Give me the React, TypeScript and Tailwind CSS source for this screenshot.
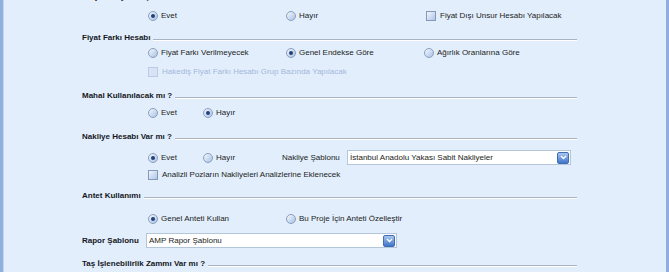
import React from 'react';

const font = { fontFamily: '"Liberation Sans", Arial, sans-serif' };

const Heading = ({ text, className = '' }: { text: string; className?: string }) => (
  <div className={`flex h-[14px] items-center ${className}`}>
    <span className="whitespace-nowrap text-[8px] font-bold text-[#15171c]">{text}</span>
    <div className="ml-[3px] mt-[3px] h-[2px] flex-1 border-t border-b border-t-[#aab3bf] border-b-white" />
  </div>
);

const Radio = ({ checked = false }: { checked?: boolean }) => (
  <span className="flex h-[10px] w-[10px] shrink-0 items-center justify-center rounded-full border border-[#8a9fbd] bg-gradient-to-br from-[#f4f8fd] to-[#a9c3e6]">
    {checked && <span className="h-[4px] w-[4px] rounded-full bg-[#24417a]" />}
  </span>
);

const Check = ({ disabled = false }: { disabled?: boolean }) => (
  <span
    className={`h-[10px] w-[10px] shrink-0 border ${
      disabled
        ? 'border-[#bccbe1] bg-[#d7e4f5]'
        : 'border-[#8498b8] bg-gradient-to-br from-[#f2f6fc] to-[#aec6e8]'
    }`}
  />
);

const Option = ({ label, checked, width }: { label: string; checked?: boolean; width: string }) => (
  <div className={`flex items-center gap-[3px] ${width}`}>
    <Radio checked={checked} />
    <span className="whitespace-nowrap text-[8px] text-[#1b1d22]">{label}</span>
  </div>
);

const CheckRow = ({ label, disabled }: { label: string; disabled?: boolean }) => (
  <div className="flex items-center gap-[4px]">
    <Check disabled={disabled} />
    <span className={`whitespace-nowrap text-[8px] ${disabled ? 'text-[#a2b8da]' : 'text-[#1b1d22]'}`}>
      {label}
    </span>
  </div>
);

const Select = ({ value, width }: { value: string; width: string }) => (
  <div className={`flex h-[15px] items-center justify-between border border-[#b3c6dc] bg-white pl-[2px] pr-[1px] ${width}`}>
    <span className="whitespace-nowrap text-[8px] text-[#1b1d22]">{value}</span>
    <span className="flex h-[12px] w-[12px] items-center justify-center rounded-[2px] border border-[#3f6db4] bg-gradient-to-b from-[#a9c7f0] to-[#3e74c9]">
      <svg width="7" height="5" viewBox="0 0 7 5">
        <path d="M1 1 L3.5 3.5 L6 1" fill="none" stroke="white" strokeWidth="1.4" />
      </svg>
    </span>
  </div>
);

export default function App() {
  return (
    <div
      className="h-[272px] w-[669px] overflow-hidden border-l-[3px] border-r-[3px] border-l-[#8fb0df] border-r-[#8fb0df] bg-[#e2eefc]"
      style={font}
    >
      <div className="h-full border-l border-[#c4d7f2] pl-[78px]">
        <div className="flex w-[495px] flex-col">
          <Heading text="Projede Fiyat Düşük Hesabı Var mı ?" className="-mt-[10px]" />

          <div className="mt-[5px] flex h-[14px] items-center pl-[66px]">
            <Option label="Evet" checked width="w-[138px]" />
            <Option label="Hayır" width="w-[140px]" />
            <CheckRow label="Fiyat Dışı Unsur Hesabı Yapılacak" />
          </div>

          <Heading text="Fiyat Farkı Hesabı" className="mt-[8px]" />

          <div className="mt-[1px] flex h-[14px] items-center pl-[66px]">
            <Option label="Fiyat Farkı Verilmeyecek" width="w-[138px]" />
            <Option label="Genel Endekse Göre" checked width="w-[138px]" />
            <Option label="Ağırlık Oranlarına Göre" width="w-[140px]" />
          </div>

          <div className="mt-[5px] flex h-[14px] items-center pl-[66px]">
            <CheckRow label="Hakediş Fiyat Farkı Hesabı Grup Bazında Yapılacak" disabled />
          </div>

          <Heading text="Mahal Kullanılacak mı ?" className="mt-[10px]" />

          <div className="mt-[3px] flex h-[14px] items-center pl-[66px]">
            <Option label="Evet" width="w-[55px]" />
            <Option label="Hayır" checked width="w-[60px]" />
          </div>

          <Heading text="Nakliye Hesabı Var mı ?" className="mt-[10px]" />

          <div className="mt-[6px] flex h-[15px] items-center pl-[66px]">
            <Option label="Evet" checked width="w-[55px]" />
            <Option label="Hayır" width="w-[79px]" />
            <span className="w-[65px] whitespace-nowrap text-[8px] text-[#1b1d22]">Nakliye Şablonu</span>
            <Select value="İstanbul Anadolu Yakası Sabit Nakliyeler" width="w-[224px]" />
          </div>

          <div className="mt-[3px] flex h-[14px] items-center pl-[66px]">
            <CheckRow label="Analizli Pozların Nakliyeleri Analizlerine Eklenecek" />
          </div>

          <Heading text="Antet Kullanımı" className="mt-[7px]" />

          <div className="mt-[9px] flex h-[14px] items-center pl-[66px]">
            <Option label="Genel Anteti Kullan" checked width="w-[138px]" />
            <Option label="Bu Proje İçin Anteti Özelleştir" width="w-[160px]" />
          </div>

          <div className="mt-[7px] flex h-[15px] items-center">
            <span className="w-[64px] whitespace-nowrap text-[8px] font-bold text-[#15171c]">Rapor Şablonu</span>
            <Select value="AMP Rapor Şablonu" width="w-[251px]" />
          </div>

          <Heading text="Taş İşlenebilirlik Zammı Var mı ?" className="mt-[9px]" />
        </div>
      </div>
    </div>
  );
}
